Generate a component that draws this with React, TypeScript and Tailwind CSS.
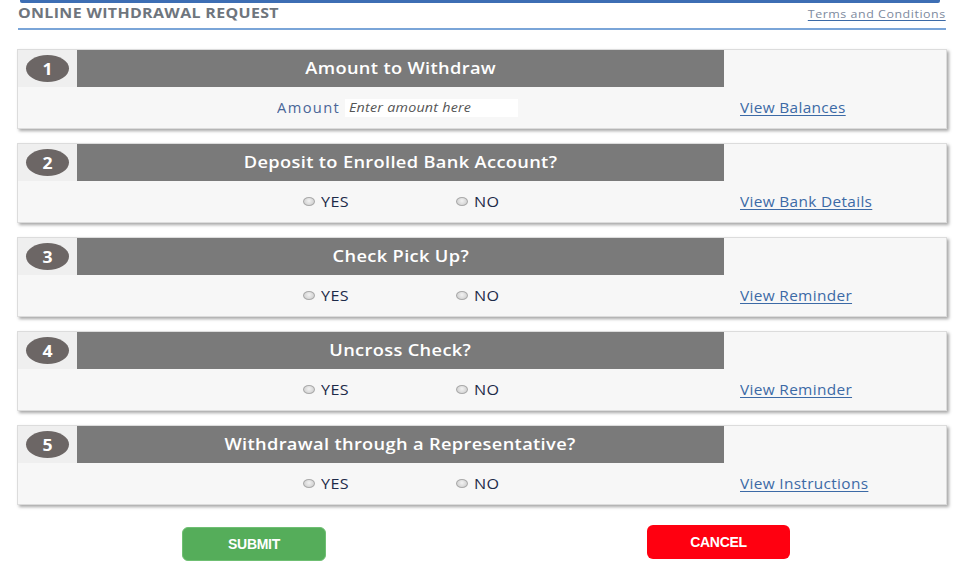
import React from "react";

type Row = {
  n: number;
  title: string;
  link: string;
  amount?: boolean;
};

const rows: Row[] = [
  { n: 1, title: "Amount to Withdraw", link: "View Balances", amount: true },
  { n: 2, title: "Deposit to Enrolled Bank Account?", link: "View Bank Details" },
  { n: 3, title: "Check Pick Up?", link: "View Reminder" },
  { n: 4, title: "Uncross Check?", link: "View Reminder" },
  { n: 5, title: "Withdrawal through a Representative?", link: "View Instructions" },
];

const font = { fontFamily: '"Open Sans", "Noto Sans", sans-serif' };

function Radio({ label }: { label: string }) {
  return (
    <div className="flex items-center gap-[6px] w-[153px]">
      <span className="block w-[12px] h-[9px] rounded-[50%] border border-[#a9a9a9] bg-[radial-gradient(circle_at_50%_40%,#f2f2f2,#c9c9c9)]" />
      <span className="text-[14px] text-[#1d2a48] font-medium tracking-[0.4px] scale-x-[1.15] origin-left">{label}</span>
    </div>
  );
}

function Card({ row }: { row: Row }) {
  return (
    <div className="h-[80px] bg-[#f7f7f7] border border-[#dcdcdc] shadow-[2px_2px_3px_rgba(0,0,0,0.35)] grid grid-cols-[59px_647px_1fr] grid-rows-[37px_1fr]">
      <div className="bg-[#efefef] flex items-center justify-center">
        <div className="w-[43px] h-[27px] shrink-0 rounded-[50%] bg-[#6c6665] flex items-center justify-center">
          <span className="text-white font-bold text-[16px] scale-x-[1.1]">{row.n}</span>
        </div>
      </div>
      <div className="bg-[#7a7a7a] flex items-center justify-center">
        <span className="text-white font-semibold text-[16px] tracking-[0.3px] scale-x-[1.14] whitespace-nowrap -mt-[2px]">{row.title}</span>
      </div>
      <div />
      <div className="col-span-2 flex items-center">
        {row.amount ? (
          <div className="flex items-center ml-[259px]">
            <span className="text-[14px] text-[#4a6698] tracking-[1.3px] scale-x-[1.05] origin-left">Amount</span>
            <div className="ml-[8px] w-[173px] h-[18px] bg-white flex items-center pl-[4px]">
              <span className="italic text-[13px] text-[#555] whitespace-nowrap tracking-[0.2px] scale-x-[1.1] origin-left">Enter amount here</span>
            </div>
          </div>
        ) : (
          <div className="flex items-center ml-[285px]">
            <Radio label="YES" />
            <Radio label="NO" />
          </div>
        )}
      </div>
      <div className="flex items-center pl-[16px]">
        <a className="text-[14px] text-[#3c6aa6] underline underline-offset-[2px] tracking-[0.3px] scale-x-[1.1] origin-left whitespace-nowrap">
          {row.link}
        </a>
      </div>
    </div>
  );
}

export default function App() {
  return (
    <div className="w-[959px] h-[573px] bg-white overflow-hidden" style={font}>
      <div className="ml-[20px] w-[920px] h-[3px] bg-[#3d6eb4] rounded-b-[2px]" />
      <div className="ml-[18px] mr-[13px]">
        <div className="flex items-end justify-between h-[27px] pb-[5px] border-b-2 border-[#7aa5d8]">
          <span className="font-bold text-[14px] text-[#6e757d] tracking-[0.3px] scale-x-[1.14] origin-left whitespace-nowrap">
            ONLINE WITHDRAWAL REQUEST
          </span>
          <a className="text-[11.5px] text-[#7d8a9e] underline decoration-[#3c6aa6] underline-offset-[2px] tracking-[0.5px] scale-x-[1.08] origin-right mb-[1px] whitespace-nowrap">
            Terms and Conditions
          </a>
        </div>
      </div>
      <div className="ml-[17px] w-[930px] mt-[19px] flex flex-col gap-[14px]">
        {rows.map((r) => (
          <Card key={r.n} row={r} />
        ))}
      </div>
      <div className="flex mt-[22px]">
        <button className="ml-[182px] w-[144px] h-[34px] rounded-[6px] bg-[#55ad5a] text-white text-[14px] font-bold tracking-[-0.3px] border border-[#6fbf73]" style={{ fontFamily: '"Liberation Sans", Arial, sans-serif' }}>
          SUBMIT
        </button>
        <button className="ml-[321px] -mt-[2px] w-[143px] h-[34px] rounded-[6px] bg-[#ff0010] text-white text-[14px] font-bold tracking-[-0.3px]" style={{ fontFamily: '"Liberation Sans", Arial, sans-serif' }}>
          CANCEL
        </button>
      </div>
    </div>
  );
}
